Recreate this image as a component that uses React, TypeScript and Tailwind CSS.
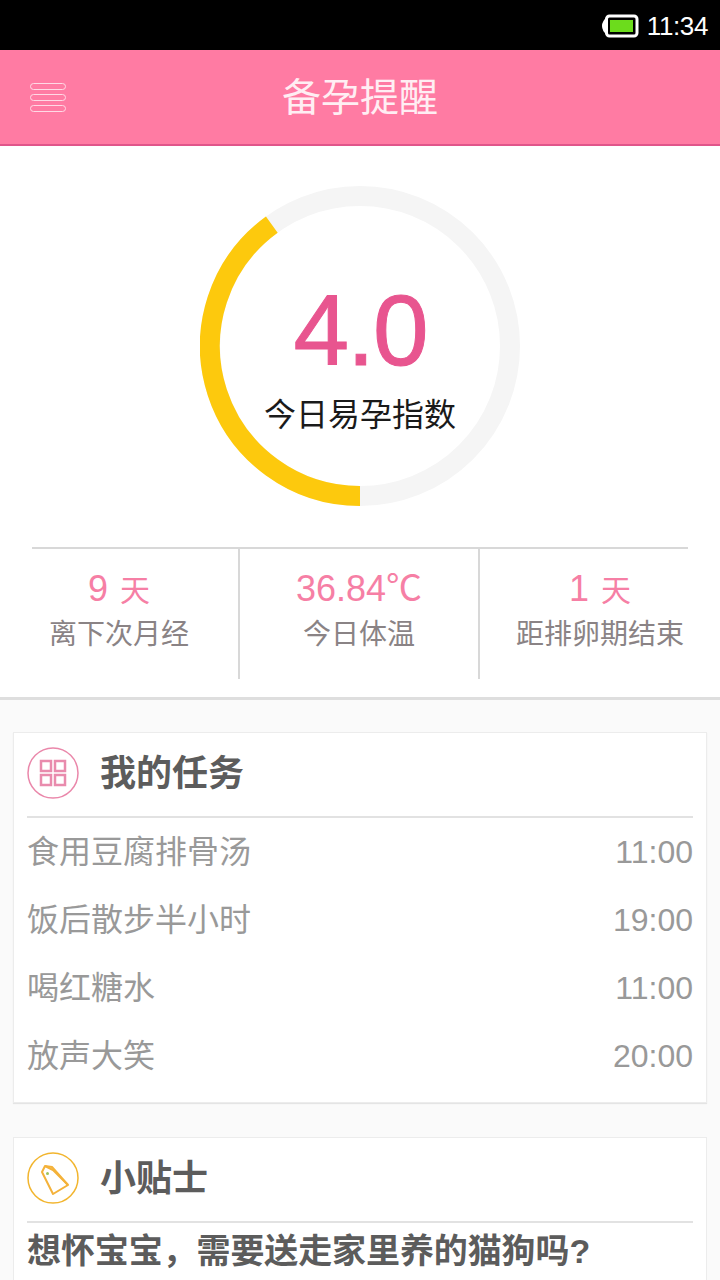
const cjk = "font-['Liberation_Sans','Noto_Sans_CJK_SC',sans-serif]";

const TASKS = [
  { name: "食用豆腐排骨汤", time: "11:00" },
  { name: "饭后散步半小时", time: "19:00" },
  { name: "喝红糖水", time: "11:00" },
  { name: "放声大笑", time: "20:00" },
];

const STATS = [
  { value: "9", unit: "天", label: "离下次月经" },
  { value: "36.84℃", unit: "", label: "今日体温" },
  { value: "1", unit: "天", label: "距排卵期结束" },
];

const StatusBar = () => (
  <div className="h-[50px] bg-black flex items-center justify-end pr-[12px] pt-[2px] gap-[8px]">
    <svg width="38" height="24" viewBox="0 0 38 24">
      <path d="M6 3 Q1 7 1 12 Q1 17 6 21 Z" fill="#fff" />
      <rect x="5.5" y="2" width="30.5" height="20" rx="3" fill="#000" stroke="#fff" strokeWidth="3" />
      <rect x="9" y="6" width="23" height="12" fill="#6cdc1c" />
    </svg>
    <span className="text-[26px] leading-none tracking-[-0.4px] text-white font-['Liberation_Sans',sans-serif]">11:34</span>
  </div>
);

const Header = () => (
  <div className="h-[96px] bg-[#ff7ba3] border-b-2 border-[#e0558a] flex items-center justify-center relative">
    <div className="absolute left-[30px] top-[33px] w-[36px] flex flex-col gap-[4px]">
      <span className="h-[7px] rounded-full border-[1.5px] border-[#ffd9e5]" />
      <span className="h-[7px] rounded-full border-[1.5px] border-[#ffd9e5]" />
      <span className="h-[7px] rounded-full border-[1.5px] border-[#ffd9e5]" />
    </div>
    <h1 className="text-[39px] leading-none text-[#ffeef3]">备孕提醒</h1>
  </div>
);

const Ring = () => (
  <div className="relative w-[320px] h-[320px] mx-auto">
    <svg width="320" height="320" viewBox="0 0 320 320">
      <circle cx="160" cy="160" r="150" fill="none" stroke="#f5f5f5" strokeWidth="20" />
      <path d="M160 310 A150 150 0 0 1 71.8 38.6" fill="none" stroke="#fdc90d" strokeWidth="20" />
    </svg>
    <div className="absolute inset-0 flex flex-col items-center">
      <span className="mt-[94px] text-[100px] leading-[100px] tracking-[-2px] text-[#e8558f] [-webkit-text-stroke:1px_#e8558f] font-['Liberation_Sans',sans-serif]">4.0</span>
      <span className="mt-[19px] text-[32px] leading-none text-[#1a1a1a]">今日易孕指数</span>
    </div>
  </div>
);

const Stats = () => (
  <div className="mt-[41px]">
    <div className="mx-[32px] h-[2px] bg-[#d8d8d8]" />
    <div className="grid grid-cols-3 h-[130px]">
      {STATS.map((s, i) => (
        <div key={s.label} className={`flex flex-col items-center pt-[20px] ${i < 2 ? "border-r-2 border-[#d8d8d8]" : ""}`}>
          <span className="h-[40px] flex items-baseline gap-[12px] text-[36px] leading-[40px] text-[#f67fa5]">
            {s.value}
            {s.unit && <span className="text-[30px]">{s.unit}</span>}
          </span>
          <span className="mt-[9px] text-[28px] leading-[34px] text-[#8a8385]">{s.label}</span>
        </div>
      ))}
    </div>
  </div>
);

const CardHeader = ({ icon, title }: { icon: React.ReactNode; title: string }) => (
  <div className="flex items-center h-[85px] mx-[13px] border-b-2 border-[#e2e2e2] gap-[21px] pb-[3px]">
    {icon}
    <h2 className="mt-[2px] text-[36px] leading-none font-bold text-[#5c5c5c]">{title}</h2>
  </div>
);

const GridIcon = () => (
  <svg width="52" height="52" viewBox="0 0 52 52">
    <circle cx="26" cy="26" r="25" fill="#fff" stroke="#ea87aa" strokeWidth="1.5" />
    <g fill="none" stroke="#e98bad" strokeWidth="2.5">
      <rect x="14" y="14" width="10" height="10" />
      <rect x="28" y="14" width="10" height="10" />
      <rect x="14" y="28" width="10" height="10" />
      <rect x="28" y="28" width="10" height="10" />
    </g>
  </svg>
);

const TagIcon = () => (
  <svg width="52" height="52" viewBox="0 0 52 52">
    <circle cx="26" cy="26" r="25" fill="#fff" stroke="#f2b52e" strokeWidth="1.5" />
    <g fill="none" stroke="#f4b23a" strokeWidth="2" strokeLinejoin="round">
      <path d="M15 20 L18 14 L25 15 L41 33 L26 42 Z" />
      <path d="M18 14 L26 18 L41 33" />
    </g>
    <circle cx="20.5" cy="21.5" r="1.5" fill="#9fc35a" />
  </svg>
);

export default function App() {
  return (
    <div className={`w-[720px] h-[1280px] overflow-hidden bg-[#fafafa] ${cjk}`}>
      <StatusBar />
      <Header />
      <section className="h-[554px] bg-white border-b-[3px] border-[#dedede] pt-[40px]">
        <Ring />
        <Stats />
      </section>

      <div className="mx-[13px] mt-[32px] h-[371px] bg-white border border-[#ececec] shadow-[0_1px_1px_#e4e4e4]">
        <CardHeader icon={<GridIcon />} title="我的任务" />
        <ul className="mx-[13px]">
          {TASKS.map((t) => (
            <li key={t.name} className="h-[68px] flex items-center justify-between text-[32px] text-[#999999]">
              <span>{t.name}</span>
              <span className="text-[32px]">{t.time}</span>
            </li>
          ))}
        </ul>
      </div>

      <div className="mx-[13px] mt-[34px] h-[200px] bg-white border border-[#ececec]">
        <CardHeader icon={<TagIcon />} title="小贴士" />
        <p className="mx-[13px] mt-[8px] text-[34px] leading-[40px] tracking-[-0.1px] font-bold text-[#5c5c5c] whitespace-nowrap">想怀宝宝，需要送走家里养的猫狗吗?</p>
      </div>
    </div>
  );
}
